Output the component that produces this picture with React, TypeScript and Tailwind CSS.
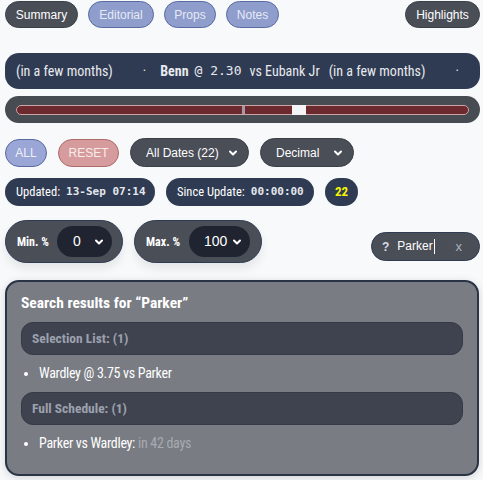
import React from 'react';

const narrow = { fontFamily: '"Roboto Condensed", "Liberation Sans Narrow", Roboto, sans-serif' };
const mono = { fontFamily: '"DejaVu Sans Mono", monospace' };

const Chevron: React.FC = () => (
  <svg width="12" height="12" viewBox="0 0 24 24" fill="none" stroke="currentColor" strokeWidth="4" strokeLinecap="round" strokeLinejoin="round">
    <path d="M6 9l6 6 6-6" />
  </svg>
);

const App: React.FC = () => {
  return (
    <div className="min-h-[480px] whitespace-nowrap bg-[#f8f9fa] pl-[5px] pr-[3px] pt-px text-[12px] text-white" style={{ fontFamily: '"Liberation Sans", Arial, sans-serif' }}>
      {/* tabs */}
      <div className="flex h-[27px] items-center gap-[10px]">
        <div className="flex h-full w-[73px] items-center justify-center rounded-full border border-[#3b3f47] bg-[#4a4e57]">Summary</div>
        <div className="flex h-full w-[66px] items-center justify-center rounded-full border border-[#5a6aa0] bg-[#8e9dcc] text-[#e6eaf5]">Editorial</div>
        <div className="flex h-full w-[52px] items-center justify-center rounded-full border border-[#5a6aa0] bg-[#8e9dcc] text-[#e6eaf5]">Props</div>
        <div className="flex h-full w-[53px] items-center justify-center rounded-full border border-[#5a6aa0] bg-[#8e9dcc] text-[#e6eaf5]">Notes</div>
        <div className="ml-auto flex h-full w-[75px] items-center justify-center rounded-full border border-[#3b3f47] bg-[#4a4e57]">Highlights</div>
      </div>

      {/* ticker */}
      <div className="mt-[25px] flex h-[36px] items-center overflow-hidden rounded-[14px] bg-[#2f3b52] pl-[11px] text-[14px] text-[#e8eaef]" style={narrow}>
        <span>(in a few months)</span>
        <span className="ml-[30px]">·</span>
        <span className="ml-[14px] font-bold">Benn</span>
        <span className="ml-[6px] text-[13px]" style={mono}>@ 2.30</span>
        <span className="ml-[8px]">vs Eubank Jr</span>
        <span className="ml-[9px]">(in a few months)</span>
        <span className="ml-[30px]">·</span>
      </div>

      {/* progress */}
      <div className="mt-[7px] flex h-[27px] items-center rounded-[14px] bg-[#474b52] px-[11px]">
        <div className="relative h-[10px] w-full rounded-full border border-[#c9a4a4] bg-[#6d2a2e]">
          <div className="absolute left-[225px] top-0 h-full w-[3px] bg-[#a898aa]" />
          <div className="absolute left-[275px] top-[-1px] h-[10px] w-[14px] bg-[#f4f4f6]" />
        </div>
      </div>

      {/* controls */}
      <div className="mt-[15px] flex h-[29px] items-center gap-[11px]">
        <div className="flex h-[28px] w-[42px] items-center justify-center rounded-full border border-[#5a6aa0] bg-[#9aa6d6] text-[#eef0f8]">ALL</div>
        <div className="flex h-[28px] w-[61px] items-center justify-center rounded-full border border-[#b06a6a] bg-[#d69b9c] text-[#f7eded]">RESET</div>
        <div className="flex h-[29px] w-[119px] items-center justify-between rounded-full border border-[#3b3f47] bg-[#4a4e57] pl-[15px] pr-[9px]">
          <span>All Dates (22)</span>
          <Chevron />
        </div>
        <div className="flex h-[29px] w-[94px] items-center justify-between rounded-full border border-[#3b3f47] bg-[#4a4e57] pl-[15px] pr-[9px]">
          <span>Decimal</span>
          <Chevron />
        </div>
      </div>

      {/* status */}
      <div className="mt-[11px] flex h-[28px] items-center gap-[11px]" style={narrow}>
        <div className="flex h-full w-[150px] items-center rounded-full bg-[#2f3b52] pl-[11px]">
          <span className="text-[12.5px]">Updated:</span>
          <span className="ml-[6px] text-[11px] font-bold text-[#e4e7ed]" style={mono}>13-Sep 07:14</span>
        </div>
        <div className="flex h-full w-[148px] items-center rounded-full bg-[#2f3b52] pl-[11px]">
          <span className="text-[12.5px]">Since Update:</span>
          <span className="ml-[6px] text-[11px] font-bold text-[#e4e7ed]" style={mono}>00:00:00</span>
        </div>
        <div className="flex h-full w-[33px] items-center justify-center rounded-full bg-[#2f3b52] text-[13px] font-bold text-[#f5f500]">22</div>
      </div>

      {/* filters */}
      <div className="mt-[14px] flex items-center">
        <div className="flex h-[43px] w-[118px] items-center rounded-full border border-[#2f3b52] bg-[#4a4e57] pl-[11px] pr-[10px] shadow-[0_6px_10px_rgba(0,0,0,0.08)]">
          <span className="text-[12px] font-bold" style={narrow}>Min. %</span>
          <div className="ml-auto flex h-[31px] w-[55px] items-center justify-between rounded-full bg-[#1f2430] pl-[16px] pr-[7px] text-[14px]">
            <span>0</span>
            <Chevron />
          </div>
        </div>
        <div className="ml-[11px] flex h-[43px] w-[128px] items-center rounded-full border border-[#2f3b52] bg-[#4a4e57] pl-[11px] pr-[11px] shadow-[0_6px_10px_rgba(0,0,0,0.08)]">
          <span className="text-[12px] font-bold" style={narrow}>Max. %</span>
          <div className="ml-auto flex h-[31px] w-[61px] items-center justify-between rounded-full bg-[#1f2430] pl-[15px] pr-[7px] text-[14px]">
            <span>100</span>
            <Chevron />
          </div>
        </div>
        <div className="ml-auto mt-[10px] flex h-[29px] w-[109px] items-center rounded-full border border-[#2f3b52] bg-[#4a4e57] pl-[10px] pr-[17px] text-[12px]">
          <span className="font-bold text-[#d8dce6]">?</span>
          <span className="ml-[8px] border-r border-white pr-px leading-[15px]">Parker</span>
          <span className="ml-auto text-[13px] text-[#aeb2ba]">x</span>
        </div>
      </div>

      {/* results */}
      <div className="mt-[17px] mr-px rounded-[14px] border-2 border-[#2a3446] bg-[#797c83] px-[14px] pb-[21px] pt-[12px] shadow-[0_2px_8px_rgba(0,0,0,0.15)]" style={narrow}>
        <div className="text-[15.5px] font-bold leading-[18px]">Search results for “Parker”</div>
        <div className="mt-[10px] flex h-[33px] items-center rounded-[12px] border border-[#353a46] bg-[#3f4350] px-[10px] text-[13.5px] font-bold text-[#9ca1ad]">Selection List: (1)</div>
        <ul className="mt-[9px] list-disc pl-[18px] text-[14px] leading-[19px] tracking-[-0.3px]">
          <li>Wardley @ 3.75 vs Parker</li>
        </ul>
        <div className="mt-[9px] flex h-[33px] items-center rounded-[12px] border border-[#353a46] bg-[#3f4350] px-[10px] text-[13.5px] font-bold text-[#9ca1ad]">Full Schedule: (1)</div>
        <ul className="mt-[9px] list-disc pl-[18px] text-[14px] leading-[19px] tracking-[-0.3px]">
          <li>Parker vs Wardley: <span className="text-[#a8abb2]">in 42 days</span></li>
        </ul>
      </div>
    </div>
  );
};

export default App;
